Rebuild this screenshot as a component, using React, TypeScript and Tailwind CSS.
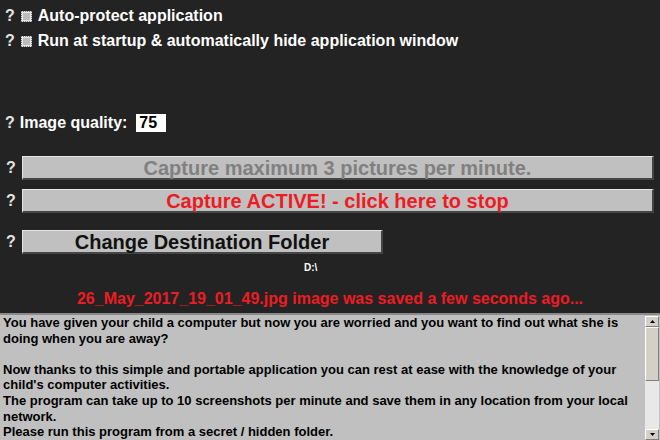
import React from 'react'

const q = 'text-[#e4e4e4] text-[16px] leading-[18px]'

function Check() {
  return (
    <span className="w-[11px] h-[11px] bg-[#e6e6e6] border border-dotted border-[#777] flex items-center justify-center">
      <span className="w-[7px] h-[7px] bg-[#bdbdbd]" />
    </span>
  )
}

function Btn({ width, color, children }: { width: string; color: string; children: React.ReactNode }) {
  return (
    <div
      className={`${width} h-[24px] bg-[#c0c0c0] border-t border-l border-t-[#e6e6e6] border-l-[#e6e6e6] border-b-2 border-r-2 border-b-[#454545] border-r-[#454545] flex items-center justify-center text-[20px] leading-[20px] ${color}`}
    >
      {children}
    </div>
  )
}

const lines = [
  'You have given your child a computer but now you are worried and you want to find out what she is',
  'doing when you are away?',
  '',
  'Now thanks to this simple and portable application you can rest at ease with the knowledge of your',
  "child's computer activities.",
  'The program can take up to 10 screenshots per minute and save them in any location from your local',
  'network.',
  'Please run this program from a secret / hidden folder.',
]

export default function App() {
  return (
    <div className="w-[660px] h-[440px] bg-[#232323] overflow-hidden font-['Liberation_Sans',Arial,sans-serif] font-bold flex flex-col">
      {/* Options */}
      <div className="flex items-center h-[18px] mt-[7px] pl-[5px]">
        <span className={q}>?</span>
        <span className="ml-[6px]"><Check /></span>
        <span className="ml-[6px] text-white text-[16px] leading-[18px]">Auto-protect application</span>
      </div>
      <div className="flex items-center h-[18px] mt-[7px] pl-[5px]">
        <span className={q}>?</span>
        <span className="ml-[6px]"><Check /></span>
        <span className="ml-[6px] text-white text-[16px] leading-[18px]">Run at startup &amp; automatically hide application window</span>
      </div>

      <div className="flex items-center h-[18px] mt-[64px] pl-[5px]">
        <span className={q}>?</span>
        <span className="ml-[5px] text-white text-[16px] leading-[18px]">Image quality:</span>
        <span className="ml-[9px] w-[30px] h-[18px] bg-white text-black text-[16px] leading-[18px] pl-[3px]">75</span>
      </div>

      {/* Buttons */}
      <div className="flex items-center mt-[24px] pl-[6px]">
        <span className={`${q} w-[16px]`}>?</span>
        <Btn width="w-[632px]" color="text-[#808080]">Capture maximum 3 pictures per minute.</Btn>
      </div>
      <div className="flex items-center mt-[9px] pl-[6px]">
        <span className={`${q} w-[16px]`}>?</span>
        <Btn width="w-[632px]" color="text-[#ed1c24]">Capture ACTIVE! - click here to stop</Btn>
      </div>
      <div className="flex items-center mt-[17px] pl-[6px]">
        <span className={`${q} w-[16px]`}>?</span>
        <Btn width="w-[361px]" color="text-[#111]">Change Destination Folder</Btn>
      </div>

      <div className="mt-[8px] pl-[304px] text-white text-[10px] leading-[12px]">D:\</div>

      <div className="mt-[16px] text-center text-[#ed1c24] text-[16px] leading-[18px]">
        26_May_2017_19_01_49.jpg image was saved a few seconds ago...
      </div>

      {/* Description box */}
      <div className="mt-[5px] flex-1 bg-[#c0c0c0] border-t-2 border-[#8a8a8a] flex">
        <div className="flex-1 pl-[3px] text-black text-[13px] leading-[15.6px] whitespace-nowrap overflow-hidden">
          {lines.map((l, i) => (
            <div key={i} className="h-[15.6px]">{l}</div>
          ))}
        </div>
        <div className="w-[14px] mr-[1px] mt-[1px] flex flex-col bg-[#e8e8e8]">
          <div className="h-[11px] bg-[#d4d0c8] border border-t-white border-l-white border-b-[#808080] border-r-[#808080] flex items-center justify-center">
            <svg width="5" height="3" viewBox="0 0 5 3"><path d="M2.5 0L5 3H0z" fill="#000" /></svg>
          </div>
          <div className="h-[54px] bg-[#d4d0c8] border border-t-white border-l-white border-b-[#808080] border-r-[#808080]" />
          <div className="flex-1" />
          <div className="h-[11px] bg-[#d4d0c8] border border-t-white border-l-white border-b-[#808080] border-r-[#808080] flex items-center justify-center">
            <svg width="5" height="3" viewBox="0 0 5 3"><path d="M0 0H5L2.5 3z" fill="#000" /></svg>
          </div>
        </div>
      </div>
    </div>
  )
}
